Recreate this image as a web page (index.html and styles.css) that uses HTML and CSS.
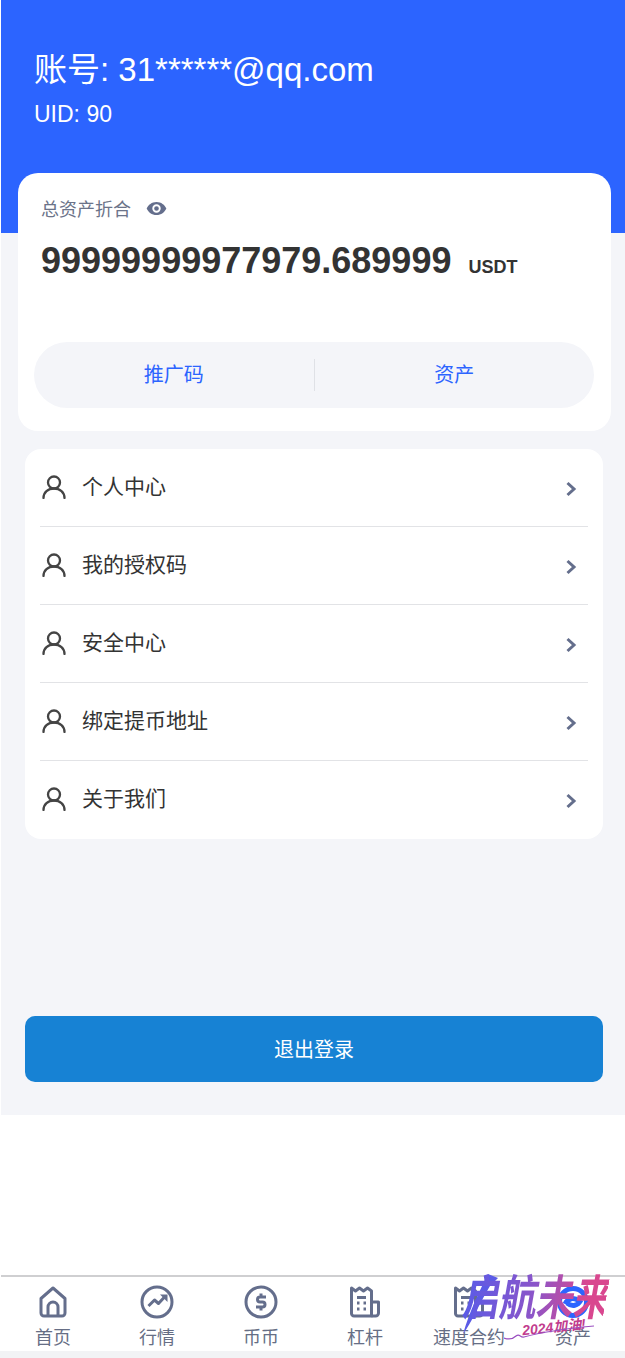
FILE: index.html
```html
<!DOCTYPE html>
<html lang="zh-CN">
<head>
  <meta charset="UTF-8">
  <meta name="viewport" content="width=device-width, initial-scale=1.0">
  <title>资产</title>
  <link rel="stylesheet" href="styles.css">
</head>
<body>

<div class="page">
  <div class="head">
    <div class="account">账号: 31******@qq.com</div>
    <div class="uid">UID: 90</div>
  </div>

  <div class="asset-card">
    <div class="asset-label">
      <span>总资产折合</span>
      <svg class="eye" viewBox="0 0 22 16"><path d="M11 1C6 1 2.200 4 .5 8c1.700 4 5.500 7 10.500 7s8.800-3 10.500-7C19.800 4 16 1 11 1zm0 11.500a4.500 4.500 0 1 1 0-9 4.500 4.500 0 0 1 0 9zM11 5.500a2.500 2.500 0 1 0 0 5 2.500 2.500 0 0 0 0-5z"/></svg>
    </div>
    <div class="asset-value">
      <span class="amount">99999999977979.689999</span>
      <span class="unit">USDT</span>
    </div>
    <div class="asset-tabs">
      <div class="asset-tab">推广码</div>
      <div class="asset-tab asset-tab-line">资产</div>
    </div>
  </div>

  <div class="menu">
    <div class="menu-row">
      <svg class="menu-icon" viewBox="0 0 24 24"><circle cx="12" cy="7.500" r="6"/><path d="M1.500 23c0-5.500 4.500-9.500 10.500-9.500S22.500 17.500 22.500 23"/></svg>
      <span class="menu-text">个人中心</span>
      <svg class="chevron" viewBox="0 0 12 16"><path d="M2.500 2l6.500 6-6.500 6"/></svg>
    </div>
    <div class="menu-row">
      <svg class="menu-icon" viewBox="0 0 24 24"><circle cx="12" cy="7.500" r="6"/><path d="M1.500 23c0-5.500 4.500-9.500 10.500-9.500S22.500 17.500 22.500 23"/></svg>
      <span class="menu-text">我的授权码</span>
      <svg class="chevron" viewBox="0 0 12 16"><path d="M2.500 2l6.500 6-6.500 6"/></svg>
    </div>
    <div class="menu-row">
      <svg class="menu-icon" viewBox="0 0 24 24"><circle cx="12" cy="7.500" r="6"/><path d="M1.500 23c0-5.500 4.500-9.500 10.500-9.500S22.500 17.500 22.500 23"/></svg>
      <span class="menu-text">安全中心</span>
      <svg class="chevron" viewBox="0 0 12 16"><path d="M2.500 2l6.500 6-6.500 6"/></svg>
    </div>
    <div class="menu-row">
      <svg class="menu-icon" viewBox="0 0 24 24"><circle cx="12" cy="7.500" r="6"/><path d="M1.500 23c0-5.500 4.500-9.500 10.500-9.500S22.500 17.500 22.500 23"/></svg>
      <span class="menu-text">绑定提币地址</span>
      <svg class="chevron" viewBox="0 0 12 16"><path d="M2.500 2l6.500 6-6.500 6"/></svg>
    </div>
    <div class="menu-row">
      <svg class="menu-icon" viewBox="0 0 24 24"><circle cx="12" cy="7.500" r="6"/><path d="M1.500 23c0-5.500 4.500-9.500 10.500-9.500S22.500 17.500 22.500 23"/></svg>
      <span class="menu-text">关于我们</span>
      <svg class="chevron" viewBox="0 0 12 16"><path d="M2.500 2l6.500 6-6.500 6"/></svg>
    </div>
  </div>

  <div class="logout">退出登录</div>
</div>

<div class="tabbar">
  <div class="tab">
    <svg class="tab-icon" viewBox="0 0 34 34"><path d="M17 3L5 13.500V28a3 3 0 0 0 3 3h18a3 3 0 0 0 3-3V13.500z"/><path d="M12 31V22a5 5 0 0 1 10 0v9"/></svg>
    <span>首页</span>
  </div>
  <div class="tab">
    <svg class="tab-icon" viewBox="0 0 34 34"><circle cx="17" cy="17" r="15"/><path d="M8.500 21l6-6 4 3.500 6.500-7"/><path class="fill" d="M20 9.500h7.500V17z"/></svg>
    <span>行情</span>
  </div>
  <div class="tab">
    <svg class="tab-icon" viewBox="0 0 34 34"><circle cx="17" cy="17" r="15"/><path d="M22 12h-6a2.500 2.500 0 0 0 0 5h2.500a2.500 2.500 0 0 1 0 5H12M17 8.500V12M17 22v3.500"/></svg>
    <span>币币</span>
  </div>
  <div class="tab">
    <svg class="tab-icon" viewBox="0 0 34 34"><path d="M3.500 3l4 3 4-3 4 3 4-3 4 3V31H6a2.500 2.500 0 0 1-2.500-2.500z"/><path d="M23.500 17h7v11a3 3 0 0 1-3 3h-4"/><path d="M9 12.500h9M9 18h2.500M15.500 18h2.500M9 24h2.500M15.500 24h2.500"/></svg>
    <span>杠杆</span>
  </div>
  <div class="tab">
    <svg class="tab-icon" viewBox="0 0 34 34"><path d="M3.500 3l4 3 4-3 4 3 4-3 4 3V31H6a2.500 2.500 0 0 1-2.500-2.500z"/><path d="M23.500 17h7v11a3 3 0 0 1-3 3h-4"/><path d="M9 12.500h9M9 18h2.500M15.500 18h2.500M9 24h2.500M15.500 24h2.500"/></svg>
    <span>速度合约</span>
  </div>
  <div class="tab tab-on">
    <svg class="tab-icon" viewBox="0 0 34 34"><circle cx="17" cy="17" r="13.500"/><path d="M9 19c3-6 9-7 14-3M25 15c-3 6-9 7-14 3"/></svg>
    <span>资产</span>
  </div>
</div>
<div class="bottom-strip"></div>

<div class="stamp">
  <svg class="stamp-brush" viewBox="0 0 40 66"><path d="M26 4C18 20 8 40 1 64c8-10 16-30 27-48l8-8z"/></svg>
  <div class="stamp-name">启航未来</div>
  <div class="stamp-year">2024加油!</div>
  <svg class="stamp-swoosh" viewBox="0 0 90 16"><path d="M0 14c6 2 9 1 12-2 4-3 4 2 8 1 18-5 38-8 70-11"/></svg>
</div>

</body>
</html>
```

FILE: styles.css
```css
* {
  box-sizing: border-box;
}
body {
  margin: 0;
  height: 1358px;
  overflow: hidden;
  background-color: #fff;
  font-family: "Liberation Sans", "Noto Sans CJK SC", sans-serif;
  position: relative;
}
.page {
  margin-left: 1px;
  height: 1115px;
  background-color: #f4f5f9;
  display: flow-root;
}
.head {
  height: 233px;
  background-color: #2c64ff;
  color: #fff;
  padding: 47px 0 0 33px;
}
.account {
  font-size: 33px;
  line-height: 46px;
}
.uid {
  font-size: 23px;
  line-height: 28px;
  margin-top: 7px;
}
.asset-card {
  margin: -60px 14px 0 17px;
  height: 258px;
  background-color: #fff;
  border-radius: 20px;
  padding: 23px 17px 0 16px;
  position: relative;
}
.asset-label {
  display: flex;
  align-items: center;
  gap: 15px;
  padding-left: 7px;
  height: 24px;
  font-size: 18px;
  color: #6b7389;
}
.eye {
  width: 21px;
  height: 15px;
  fill: #646e8c;
  fill-rule: evenodd;
}
.asset-value {
  display: flex;
  align-items: baseline;
  gap: 17px;
  padding-left: 7px;
  margin-top: 20px;
  color: #333;
  font-weight: bold;
}
.amount {
  font-size: 36px;
  line-height: 42px;
}
.unit {
  font-size: 18px;
}
.asset-tabs {
  display: flex;
  align-items: center;
  height: 66px;
  margin-top: 60px;
  background-color: #f4f5f9;
  border-radius: 33px;
  color: #2c64ff;
  font-size: 20px;
}
.asset-tab {
  flex: 1;
  height: 32px;
  line-height: 32px;
  text-align: center;
}
.asset-tab-line {
  border-left: 1px solid #dfe1e6;
}
.menu {
  margin: 18px 22px 0 24px;
  height: 390px;
  padding: 0 15px;
  background-color: #fff;
  border-radius: 16px;
}
.menu-row {
  display: flex;
  align-items: center;
  height: 78px;
  padding-left: 2px;
  border-bottom: 1px solid #e2e3e6;
}
.menu-row:last-child {
  border-bottom: none;
}
.menu-icon {
  width: 24px;
  height: 24px;
  margin-top: -2px;
  fill: none;
  stroke: #444;
  stroke-width: 2.300;
  stroke-linecap: round;
}
.menu-text {
  flex: 1;
  margin-left: 16px;
  margin-top: -6px;
  font-size: 21px;
  color: #333;
}
.chevron {
  width: 12px;
  height: 16px;
  margin-top: 2px;
  margin-right: 11px;
  fill: none;
  stroke: #646e8c;
  stroke-width: 3;
}
.logout {
  margin: 177px 22px 0 24px;
  height: 66px;
  line-height: 68px;
  text-align: center;
  background-color: #1782d4;
  border-radius: 10px;
  color: #fff;
  font-size: 20px;
}
.tabbar {
  display: flex;
  margin: 160px 0 0 1px;
  height: 76px;
  border-top: 2px solid #cfcfd1;
  background-color: #fff;
}
.tab {
  width: 104.300px;
  display: flex;
  flex-direction: column;
  align-items: center;
  padding-top: 8px;
  font-size: 18px;
  line-height: 24px;
  color: #666e85;
  white-space: nowrap;
}
.tab-icon {
  width: 34px;
  height: 34px;
  margin-bottom: 7px;
  fill: none;
  stroke: #646e8c;
  stroke-width: 3;
  stroke-linejoin: round;
}
.tab-icon .fill {
  fill: #646e8c;
  stroke: none;
}
.tab-on .tab-icon {
  stroke: #2c64ff;
  stroke-width: 5;
}
.bottom-strip {
  height: 7px;
  background-color: #f2f3f5;
}
.stamp {
  position: absolute;
  left: 462px;
  top: 1266px;
  width: 150px;
  height: 76px;
  pointer-events: none;
}
.stamp-brush {
  position: absolute;
  left: 0;
  top: 4px;
  width: 40px;
  height: 66px;
  fill: #5b5be6;
}
.stamp-name {
  font-family: "Noto Sans CJK SC", sans-serif;
  font-weight: 700;
  font-size: 37px;
  line-height: 44px;
  white-space: nowrap;
  transform-origin: 0 0;
  transform: skewX(-10deg) scaleY(1.300);
  margin-left: 8px;
  background: linear-gradient(90deg, #5b5be6 0%, #8d55c8 50%, #d9478f 85%);
  -webkit-background-clip: text;
  background-clip: text;
  color: transparent;
}
.stamp-year {
  position: absolute;
  left: 60px;
  top: 50px;
  font-size: 14px;
  font-weight: bold;
  font-style: italic;
  color: #c23c8e;
  white-space: nowrap;
  transform: rotate(-6deg);
}
.stamp-swoosh {
  position: absolute;
  left: 42px;
  top: 58px;
  width: 90px;
  height: 16px;
  fill: none;
  stroke: #9a4fc0;
  stroke-width: 1.200;
}
```
